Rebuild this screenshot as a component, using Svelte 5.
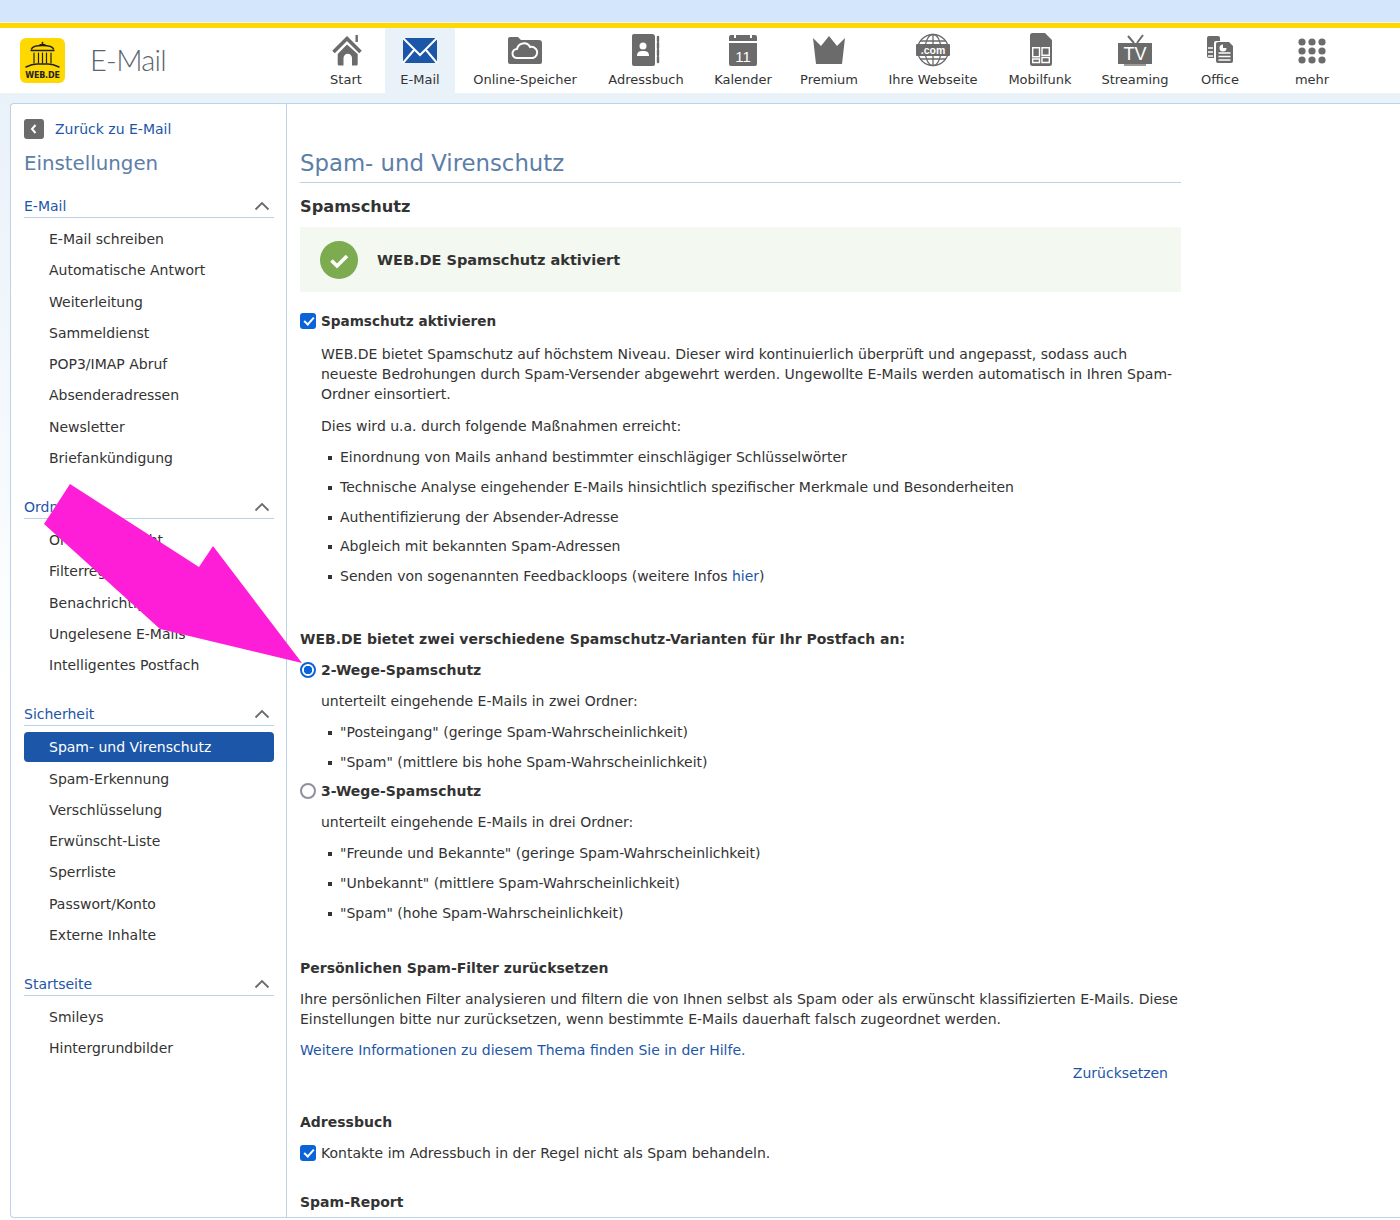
<script>
  const groups = [
    { title: 'E-Mail', items: ['E-Mail schreiben','Automatische Antwort','Weiterleitung','Sammeldienst','POP3/IMAP Abruf','Absenderadressen','Newsletter','Briefankündigung'] },
    { title: 'Ordner', items: ['Ordnerübersicht','Filterregeln','Benachrichtigungen','Ungelesene E-Mails','Intelligentes Postfach'] },
    { title: 'Sicherheit', items: ['Spam- und Virenschutz','Spam-Erkennung','Verschlüsselung','Erwünscht-Liste','Sperrliste','Passwort/Konto','Externe Inhalte'] },
    { title: 'Startseite', items: ['Smileys','Hintergrundbilder'] }
  ];
  const active = 'Spam- und Virenschutz';
  const measures = ['Einordnung von Mails anhand bestimmter einschlägiger Schlüsselwörter','Technische Analyse eingehender E-Mails hinsichtlich spezifischer Merkmale und Besonderheiten','Authentifizierung der Absender-Adresse','Abgleich mit bekannten Spam-Adressen'];
</script>

<div class="top"></div>
<header class="head">
  <div class="logo" aria-label="WEB.DE">
    <svg viewBox="0 0 45 30" width="45" height="30">
      <g fill="none" stroke="#222" stroke-linecap="round">
        <path d="M22.500 3.500v2.500" stroke-width="1.600"/>
        <path d="M20 5.500h5" stroke-width="1.200"/>
        <path d="M11.500 10c1-3 6-3.500 11-3.500S32.500 7 33.500 10" stroke-width="1.500"/>
        <path d="M11 11.500h23" stroke-width="1.300"/>
        <path d="M14 14v10M18.500 14v10M22.500 14v10M26.500 14v10M31 14v10" stroke-width="1.200"/>
        <path d="M6 28c4-2 8-3 11-3h11c3 0 7 1 11 3" stroke-width="1.500"/>
      </g>
    </svg>
    <span>WEB.DE</span>
  </div>
  <div class="brand">E-Mail</div>
  <nav class="nav">
    <a class="navitem">
      <svg viewBox="0 0 36 36"><path d="M5.500 20 19 6.500 32.500 20" fill="none" stroke="#6b6b6b" stroke-width="3.600"/><path d="M28.700 3v7" stroke="#6b6b6b" stroke-width="2.400"/><path d="M9.700 22 19 12.500 29.700 22v10a1.500 1.500 0 0 1-1.500 1.500H24V26a4.250 4.250 0 0 0-8.500 0v7.500h-4.300A1.500 1.500 0 0 1 9.700 32z" fill="#6b6b6b"/></svg>
      <span>Start</span>
    </a>
    <a class="navitem current">
      <svg viewBox="0 0 36 36"><rect x="1" y="6" width="34" height="25" rx="2" fill="#1c56a8"/><path d="M1 6l17 17L35 6M1 31l11-13M35 31 24 18" fill="none" stroke="#fff" stroke-width="2"/></svg>
      <span>E-Mail</span>
    </a>
    <a class="navitem">
      <svg viewBox="0 0 36 36"><path d="M1 7a2 2 0 0 1 2-2h8l3 3h18a3 3 0 0 1 3 3v19a2 2 0 0 1-2 2H3a2 2 0 0 1-2-2z" fill="#6b6b6b"/><path d="M10 26a4.500 4.500 0 0 1 0-9 7 7 0 0 1 13-2 5.500 5.500 0 0 1 3 11z" fill="none" stroke="#fff" stroke-width="2"/></svg>
      <span>Online-Speicher</span>
    </a>
    <a class="navitem">
      <svg viewBox="0 0 36 36"><path d="M6 2h18a3 3 0 0 1 3 3v27a2 2 0 0 1-2 2H6a2 2 0 0 1-2-2V4a2 2 0 0 1 2-2z" fill="#6b6b6b"/><circle cx="15" cy="14" r="3.500" fill="#fff"/><path d="M9 24c0-4 2-5 6-5s6 1 6 5z" fill="#fff"/><path d="M30 5v4M30 11v5M30 18v5M30 25v5" stroke="#6b6b6b" stroke-width="2.400" stroke-linecap="round"/></svg>
      <span>Adressbuch</span>
    </a>
    <a class="navitem">
      <svg viewBox="0 0 36 36"><path d="M4 5a2 2 0 0 1 2-2h3v3h2V3h14v3h2V3h3a2 2 0 0 1 2 2v4H4zM4 11h28v21a2 2 0 0 1-2 2H6a2 2 0 0 1-2-2z" fill="#6b6b6b"/><text x="18" y="30" text-anchor="middle" class="cal">11</text></svg>
      <span>Kalender</span>
    </a>
    <a class="navitem">
      <svg viewBox="0 0 36 36"><path d="M2 6l8 8 8-10 8 10 8-8-3 26H5z" fill="#6b6b6b"/></svg>
      <span>Premium</span>
    </a>
    <a class="navitem">
      <svg viewBox="0 0 36 36">
        <g fill="none" stroke="#6b6b6b" stroke-width="1.300">
          <circle cx="18" cy="18" r="15.500"/>
          <ellipse cx="18" cy="18" rx="8" ry="15.500"/>
          <path d="M18 2v32M5 9h26M5 27h26"/>
        </g>
        <rect x="1" y="12" width="34" height="12" rx="1" fill="#6b6b6b"/>
        <text x="18" y="22" text-anchor="middle" class="com">.com</text>
      </svg>
      <span>Ihre Webseite</span>
    </a>
    <a class="navitem">
      <svg viewBox="0 0 36 36"><path d="M10.500 1H23l7 7v23.500a2.500 2.500 0 0 1-2.500 2.500h-17A2.500 2.500 0 0 1 8 31.500v-28A2.500 2.500 0 0 1 10.500 1z" fill="#6b6b6b"/><path d="M10.700 15.700h6.800v9h-6.800zM20 15.700h7.300v7.500H20zM10.700 27h6.800v3.500h-6.800zM20 25.500h7.300v5H20z" fill="none" stroke="#fff" stroke-width="1.400"/></svg>
      <span>Mobilfunk</span>
    </a>
    <a class="navitem">
      <svg viewBox="0 0 36 36"><path d="M11 4l6 7M26 3l-6 8" stroke="#6b6b6b" stroke-width="2" fill="none"/><rect x="1" y="11" width="34" height="21" fill="#6b6b6b"/><rect x="7" y="32" width="22" height="2" fill="#9a9a9a"/><text x="18" y="28" text-anchor="middle" class="tv">TV</text></svg>
      <span>Streaming</span>
    </a>
    <a class="navitem">
      <svg viewBox="0 0 36 36"><path d="M7 4h9a2 2 0 0 1 2 2v3h-4a2 2 0 0 0-2 2v15H7a2 2 0 0 1-2-2V6a2 2 0 0 1 2-2z" fill="#6b6b6b"/><path d="M6 16h5M6 20h5M6 24h5" stroke="#fff" stroke-width="1.300"/><path d="M16 10h11l4 4v15a2 2 0 0 1-2 2H16a2 2 0 0 1-2-2V12a2 2 0 0 1 2-2z" fill="#6b6b6b"/><path d="M21 12.500a3.500 3.500 0 1 0 3.500 3.500H21z" fill="#fff"/><path d="M16.500 21h12M16.500 24.500h12M16.500 28h12" stroke="#fff" stroke-width="1.400"/></svg>
      <span>Office</span>
    </a>
    <a class="navitem">
      <svg viewBox="0 0 36 36" fill="#6b6b6b"><circle cx="8" cy="10" r="3.600"/><circle cx="18" cy="10" r="3.600"/><circle cx="28" cy="10" r="3.600"/><circle cx="8" cy="19" r="3.600"/><circle cx="18" cy="19" r="3.600"/><circle cx="28" cy="19" r="3.600"/><circle cx="8" cy="28" r="3.600"/><circle cx="18" cy="28" r="3.600"/><circle cx="28" cy="28" r="3.600"/></svg>
      <span>mehr</span>
    </a>
  </nav>
</header>

<div class="panel">
  <aside class="side">
    <a class="back">
      <span class="backbtn"><svg viewBox="0 0 20 20" width="20" height="20"><path d="M11.500 6 8 10l3.500 4" fill="none" stroke="#fff" stroke-width="2"/></svg></span>
      <span>Zurück zu E-Mail</span>
    </a>
    <div class="sidetitle">Einstellungen</div>
    {#each groups as g}
      <section class="group">
        <div class="grouphead">
          <span>{g.title}</span>
          <svg viewBox="0 0 16 10" width="16" height="10"><path d="M1.500 8.500 8 2l6.500 6.500" fill="none" stroke="#6b6b6b" stroke-width="1.800"/></svg>
        </div>
        <ul class="items">
          {#each g.items as it}
            <li class:on={it === active}>{it}</li>
          {/each}
        </ul>
      </section>
    {/each}
  </aside>

  <main class="main">
    <h1>Spam- und Virenschutz</h1>
    <h2 class="first">Spamschutz</h2>
    <div class="status">
      <svg viewBox="0 0 38 38" width="38" height="38"><circle cx="19" cy="19" r="19" fill="#7cab50"/><path d="M11.500 19.500l5.500 5.500 10-10" fill="none" stroke="#fff" stroke-width="3.600"/></svg>
      <strong>WEB.DE Spamschutz aktiviert</strong>
    </div>
    <label class="opt optfirst"><input type="checkbox" class="cb" checked /><b class="narrow">Spamschutz aktivieren</b></label>
    <div class="indent">
      <p class="p13">WEB.DE bietet Spamschutz auf höchstem Niveau. Dieser wird kontinuierlich überprüft und angepasst, sodass auch neueste Bedrohungen durch Spam-Versender abgewehrt werden. Ungewollte E-Mails werden automatisch in Ihren Spam-Ordner einsortiert.</p>
      <p class="p12">Dies wird u.a. durch folgende Maßnahmen erreicht:</p>
      <ul class="bul">
        {#each measures as m}<li>{m}</li>{/each}
        <li>Senden von sogenannten Feedbackloops (weitere Infos <a href="#hier">hier</a>)</li>
      </ul>
    </div>
    <h2 class="variants">WEB.DE bietet zwei verschiedene Spamschutz-Varianten für Ihr Postfach an:</h2>
    <label class="opt opt11"><input type="radio" class="rb" name="v" checked /><b>2-Wege-Spamschutz</b></label>
    <div class="indent">
      <p class="p11">unterteilt eingehende E-Mails in zwei Ordner:</p>
      <ul class="bul">
        <li>"Posteingang" (geringe Spam-Wahrscheinlichkeit)</li>
        <li>"Spam" (mittlere bis hohe Spam-Wahrscheinlichkeit)</li>
      </ul>
    </div>
    <label class="opt opt9"><input type="radio" class="rb" name="v" /><b>3-Wege-Spamschutz</b></label>
    <div class="indent">
      <p class="p11">unterteilt eingehende E-Mails in drei Ordner:</p>
      <ul class="bul">
        <li>"Freunde und Bekannte" (geringe Spam-Wahrscheinlichkeit)</li>
        <li>"Unbekannt" (mittlere Spam-Wahrscheinlichkeit)</li>
        <li>"Spam" (hohe Spam-Wahrscheinlichkeit)</li>
      </ul>
    </div>
    <h2 class="reset">Persönlichen Spam-Filter zurücksetzen</h2>
    <p class="p11">Ihre persönlichen Filter analysieren und filtern die von Ihnen selbst als Spam oder als erwünscht klassifizierten E-Mails. Diese Einstellungen bitte nur zurücksetzen, wenn bestimmte E-Mails dauerhaft falsch zugeordnet werden.</p>
    <p class="p11"><a href="#hilfe">Weitere Informationen zu diesem Thema finden Sie in der Hilfe.</a></p>
    <div class="resetrow"><a href="#reset">Zurücksetzen</a></div>
    <h2 class="next">Adressbuch</h2>
    <label class="opt opt11 plain"><input type="checkbox" class="cb" checked /><span>Kontakte im Adressbuch in der Regel nicht als Spam behandeln.</span></label>
    <h2 class="next">Spam-Report</h2>
  </main>
</div>

<svg class="arrow" viewBox="0 0 1400 1220" width="1400" height="1220" aria-hidden="true"><polygon points="70,484 44,524 160,629 302,663 213,546 199,567" fill="#ff1ed8"/></svg>

<style>
  :global(body) { margin: 0; height: 1220px; overflow: hidden; background: linear-gradient(#e9f1f9 100px, #fff 700px); font-family: "DejaVu Sans", sans-serif; color: #333; }
  .top { height: 22px; background: #d4e6fb; border-bottom: 1px solid #eef4fb; }
  .head { height: 65px; border-top: 5px solid #ffd800; background: #fff; display: flex; position: relative; }
  .logo { width: 45px; height: 45px; margin: 10px 0 0 20px; background: #ffd800; border-radius: 6px; display: flex; flex-direction: column; align-items: center; }
  .logo svg { display: block; margin-top: 1px; }
  .logo span { font: bold 8px/10px "DejaVu Sans", sans-serif; color: #222; letter-spacing: -0.200px; margin-top: 2px; }
  .brand { margin-left: 25px; width: 105px; font: 300 29px/63px Lato, sans-serif; letter-spacing: -0.700px; color: #5a6570; }
  .nav { display: grid; grid-template-columns: 78px 70px 140px 102px 92px 80px 128px 86px 104px 66px 118px; margin-left: 112px; }
  .navitem { box-sizing: border-box; padding-top: 4px; height: 65px; display: flex; flex-direction: column; align-items: center; font-size: 13px; color: #333; }
  .navitem svg { width: 36px; height: 36px; display: block; flex: none; }
  .navitem span { line-height: 20px; margin-top: 2px; white-space: nowrap; }
  .current { background: #e9f1f9; }
  .cal { font: 15px "Liberation Sans", sans-serif; fill: #fff; }
  .com { font: bold 10.500px "Liberation Sans", sans-serif; fill: #fff; }
  .tv { font: 18px "Liberation Sans", sans-serif; fill: #fff; }

  .panel { margin: 10px 0 0 10px; height: 1113px; border: 1px solid #bcd2e6; border-right: 0; border-radius: 4px 0 0 4px; background: #fff; display: flex; }
  .side { width: 276px; flex: none; box-sizing: border-box; padding: 0 12px 0 13px; border-right: 1px solid #bcd2e6; }
  .back { display: flex; align-items: center; height: 20px; margin-top: 15px; color: #1c56a8; font-size: 14px; }
  .backbtn { width: 20px; height: 20px; background: #6b6b6b; border-radius: 3px; margin-right: 11px; }
  .backbtn svg { display: block; }
  .sidetitle { font-size: 19.800px; line-height: 28px; margin-top: 11px; color: #5c7ea8; }
  .group { margin-bottom: 21px; }
  .grouphead { display: flex; justify-content: space-between; align-items: center; height: 23px; border-bottom: 1px solid #bcd2e6; color: #1c56a8; font-size: 14px; }
  .group:first-of-type .grouphead { margin-top: 16px; }
  .grouphead svg { margin-right: 4px; }
  .items { list-style: none; margin: 6px 0 0; padding: 0; }
  .items li { height: 31.250px; line-height: 30px; padding-left: 25px; font-size: 14px; border-radius: 4px; white-space: nowrap; }
  .items li.on { background: #1c56a8; color: #fff; height: 30px; margin-bottom: 1.250px; }

  .main { width: 881px; margin-left: 13px; font-size: 14px; line-height: 20px; }
  h1 { margin: 0; padding-top: 43px; height: 35px; line-height: 32px; font-size: 22.800px; font-weight: 400; color: #5c7ea8; border-bottom: 1px solid #bcd2e6; }
  h2 { margin: 0; font-size: 14px; line-height: 20px; font-weight: 700; }
  h2.first { margin-top: 14px; font-size: 16.200px; }
  .status { margin-top: 10px; height: 65px; background: #f3f8f1; display: flex; align-items: center; padding-left: 20px; gap: 19px; }
  .status strong { font-size: 14.500px; padding-top: 1px; }
  .opt { display: flex; align-items: center; height: 20px; gap: 5px; }
  .optfirst { margin-top: 19px; }
  .opt11 { margin-top: 11px; }
  .opt9 { margin-top: 9px; }
  .opt b { font-size: 14px; }
  .opt b.narrow { font-size: 13.600px; }
  .cb { appearance: none; width: 16px; height: 16px; margin: 0; border-radius: 3px; background: #0b63d8; flex: none; position: relative; }
  .cb:checked::after { content: ""; position: absolute; left: 5.500px; top: 2px; width: 4px; height: 8px; border: solid #fff; border-width: 0 2.200px 2.200px 0; transform: rotate(42deg); }
  .rb { appearance: none; width: 16px; height: 16px; margin: 0; border-radius: 50%; border: 2px solid #8f8f9d; box-sizing: border-box; flex: none; background: #fff; }
  .rb:checked { border-color: #0b63d8; background: radial-gradient(circle, #0b63d8 0 4px, #fff 4.500px); }
  .indent { padding-left: 21px; }
  p { margin: 0; }
  .p13 { margin-top: 13px; }
  .p12 { margin-top: 12px; }
  .p11 { margin-top: 11px; }
  .bul { list-style: none; margin: 11px 0 0; padding: 0 0 0 19px; }
  .bul li { position: relative; height: 20px; margin-bottom: 9.800px; }
  .bul li:last-child { margin-bottom: 0; }
  .bul li::before { content: ""; position: absolute; left: -12px; top: 9px; width: 4px; height: 4px; background: #333; }
  a { color: #1c56a8; text-decoration: none; }
  h2.variants { margin-top: 43px; }
  h2.reset { margin-top: 35px; }
  .resetrow { margin-top: 3px; text-align: right; padding-right: 13px; }
  h2.next { margin-top: 29px; }
  .arrow { position: absolute; left: 0; top: 0; pointer-events: none; }
</style>
